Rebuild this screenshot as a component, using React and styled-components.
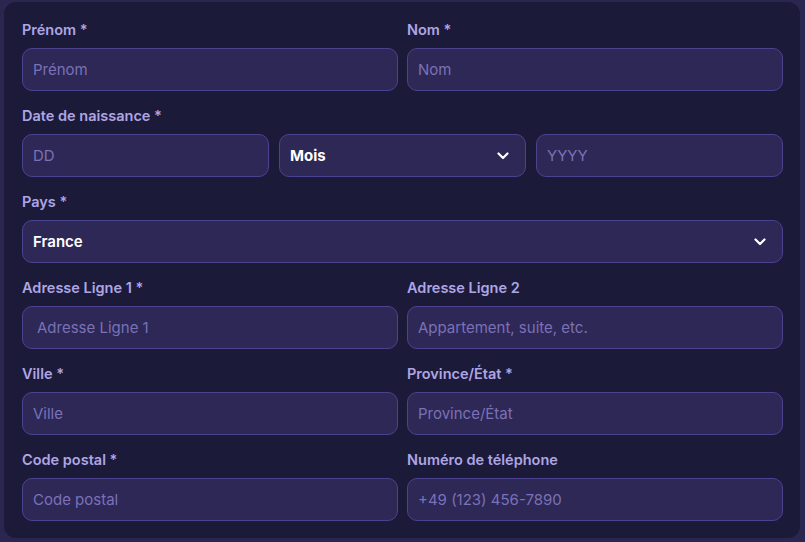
import styled, { createGlobalStyle } from "styled-components";

const GlobalStyle = createGlobalStyle`
  html, body {
    margin: 0;
    padding: 0;
    background: #2a2650;
    font-family: Inter, "Noto Sans", sans-serif;
  }
  * { box-sizing: border-box; }
`;

const Card = styled.div`
  margin: 2px 5px 4px 4px;
  padding: 19px 17px 17px 18px;
  background: #1c1a39;
  border-radius: 12px;
  display: flex;
  flex-direction: column;
  gap: 16px;
`;

const Row = styled.div`
  display: grid;
  grid-template-columns: ${(p) => `repeat(${p.cols || 1}, 1fr)`};
  column-gap: ${(p) => p.gap || 9}px;
`;

const Field = styled.div`
  display: flex;
  flex-direction: column;
  gap: 9px;
`;

const Group = styled.div`
  display: flex;
  flex-direction: column;
  gap: 9px;
`;

const Label = styled.label`
  font-size: 14.5px;
  line-height: 18px;
  font-weight: 600;
  color: #aea6e4;
`;

const Input = styled.input`
  height: 43px;
  width: 100%;
  padding: 0 10px 0 ${(p) => p.$pl || 10}px;
  background: #2d2855;
  border: 1.5px solid #4b4390;
  border-radius: 10px;
  color: #fff;
  font-family: inherit;
  font-size: 15px;
  outline: none;
  &::placeholder {
    color: #7b71b9;
  }
`;

const Select = styled.div`
  height: 43px;
  display: flex;
  align-items: center;
  justify-content: space-between;
  padding: 0 16px 0 10px;
  background: #2d2855;
  border: 1.5px solid #4b4390;
  border-radius: 10px;
  color: #fff;
  font-size: 15px;
  font-weight: ${(p) => p.$weight || 700};
`;

const Chevron = () => (
  <svg width="12" height="8" viewBox="0 0 12 8" fill="none">
    <path d="M1.5 1.5 L6 6 L10.5 1.5" stroke="#fff" strokeWidth="2.2" strokeLinecap="round" strokeLinejoin="round" />
  </svg>
);

const TextField = ({ label, placeholder, pl }) => (
  <Field>
    <Label>{label}</Label>
    <Input placeholder={placeholder} $pl={pl} />
  </Field>
);

export default function App() {
  return (
    <>
      <GlobalStyle />
      <Card>
        <Row cols={2}>
          <TextField label="Prénom *" placeholder="Prénom" />
          <TextField label="Nom *" placeholder="Nom" />
        </Row>
        <Group>
          <Label>Date de naissance *</Label>
          <Row cols={3} gap={10}>
            <Input placeholder="DD" />
            <Select>
              <span>Mois</span>
              <Chevron />
            </Select>
            <Input placeholder="YYYY" />
          </Row>
        </Group>
        <Group>
          <Label>Pays *</Label>
          <Select $weight={600}>
            <span>France</span>
            <Chevron />
          </Select>
        </Group>
        <Row cols={2}>
          <TextField label="Adresse Ligne 1 *" placeholder="Adresse Ligne 1" pl={14} />
          <TextField label="Adresse Ligne 2" placeholder="Appartement, suite, etc." />
        </Row>
        <Row cols={2}>
          <TextField label="Ville *" placeholder="Ville" />
          <TextField label="Province/État *" placeholder="Province/État" />
        </Row>
        <Row cols={2}>
          <TextField label="Code postal *" placeholder="Code postal" />
          <TextField label="Numéro de téléphone" placeholder="+49 (123) 456-7890" />
        </Row>
      </Card>
    </>
  );
}
